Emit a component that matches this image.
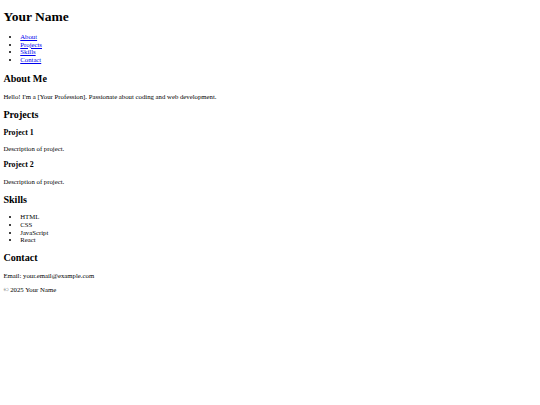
import React from "react";

// page is a default-styled document shown at 0.421875 scale (1280 -> 540)
const projects = [
  { title: "Project 1", text: "Description of project." },
  { title: "Project 2", text: "Description of project." },
];

const skills = ["HTML", "CSS", "JavaScript", "React"];

const h2 = "text-[10.125px] leading-[11.4px] font-bold my-[8.4px]";
const p = "my-[6.75px]";
const link = "text-[#0000ee] underline";

export default function App() {
  return (
    <div className="m-[3.375px] font-['Liberation_Serif',serif] text-[6.75px] leading-[7.59px] text-black">
      <header>
        <h1 className="text-[13.5px] leading-[15.2px] font-bold my-[9.05px]">Your Name</h1>
        <nav>
          <ul className="list-disc pl-[16.875px] my-[6.75px]">
            <li><a href="#about" className={link}>About</a></li>
            <li><a href="#projects" className={link}>Projects</a></li>
            <li><a href="#skills" className={link}>Skills</a></li>
            <li><a href="#contact" className={link}>Contact</a></li>
          </ul>
        </nav>
      </header>

      <main>
        <section id="about">
          <h2 className="text-[10.125px] leading-[11.4px] font-bold mt-[9.3px] mb-[8.4px]">About Me</h2>
          <p className={p}>Hello! I'm a [Your Profession]. Passionate about coding and web development.</p>
        </section>

        <section id="projects">
          <h2 className={h2}>Projects</h2>
          {projects.map((item) => (
            <div key={item.title}>
              <h3 className="text-[7.9px] leading-[8.9px] font-bold my-[7.9px]">{item.title}</h3>
              <p className={p}>{item.text}</p>
            </div>
          ))}
        </section>

        <section id="skills">
          <h2 className={h2}>Skills</h2>
          <ul className="list-disc pl-[16.875px] my-[6.75px]">
            {skills.map((s) => (
              <li key={s}>{s}</li>
            ))}
          </ul>
        </section>

        <section id="contact">
          <h2 className={h2}>Contact</h2>
          <p className={p}>Email: your.email@example.com</p>
        </section>
      </main>

      <footer>
        <p className={p}>&copy; 2025 Your Name</p>
      </footer>
    </div>
  );
}
